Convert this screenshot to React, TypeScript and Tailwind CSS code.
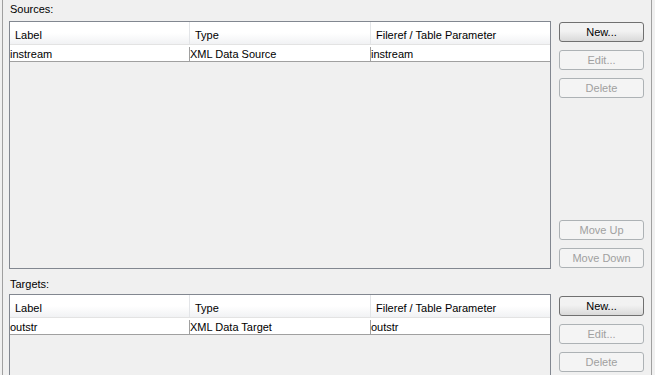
import React from 'react';

type Row = { label: string; type: string; fileref: string };

const columns = ['Label', 'Type', 'Fileref / Table Parameter'];

function DataTable({ rows, height }: { rows: Row[]; height: string }) {
  return (
    <div className={`w-[542px] ${height} border border-[#828790] bg-[#f0f0f0]`}>
      <div className="flex h-[23px] bg-gradient-to-b from-white from-50% to-[#f1f2f4] border-b border-[#e3e3e3]">
        {columns.map((c, i) => (
          <div
            key={c}
            className={`flex items-center pl-[5px] pt-[4px] ${i === 0 ? 'w-[180px]' : i === 1 ? 'w-[181px]' : 'flex-1'} ${
              i < 2 ? 'border-r border-[#e3e5e8]' : ''
            }`}
          >
            {c}
          </div>
        ))}
      </div>
      {rows.map((r) => (
        <div key={r.label} className="flex h-[17px] bg-white border-b border-[#a0a0a0] pt-[2px]">
          <div className="w-[180px] border-r border-[#a0a0a0] leading-[14px]">{r.label}</div>
          <div className="w-[181px] border-r border-[#a0a0a0] leading-[14px]">{r.type}</div>
          <div className="flex-1 leading-[14px]">{r.fileref}</div>
        </div>
      ))}
    </div>
  );
}

function Btn({ children, enabled }: { children: React.ReactNode; enabled?: boolean }) {
  return (
    <div
      className={`flex h-[20px] w-[85px] items-center justify-center rounded-[3px] border ${
        enabled
          ? 'border-[#707070] bg-gradient-to-b from-[#f2f2f2] from-45% to-[#d9d9d9] text-black'
          : 'border-[#adb2b5] bg-[#f4f4f4] text-[#a0a0a0]'
      }`}
    >
      {children}
    </div>
  );
}

export default function App() {
  return (
    <div className="h-[375px] w-[655px] overflow-hidden bg-[#f0f0f0] text-[11px] text-black font-['Liberation_Sans',Tahoma,sans-serif]">
      <div className="ml-[2px] h-full w-[650px] border-x border-[#a0a0a0] pl-[6px]">
        <div className="h-[20px] pt-[2px] leading-[14px] pl-[1px]">Sources:</div>
        <div className="flex gap-[8px] pt-px">
          <DataTable rows={[{ label: 'instream', type: 'XML Data Source', fileref: 'instream' }]} height="h-[248px]" />
          <div className="flex h-[247px] flex-col justify-between pt-[1px]">
            <div className="flex flex-col gap-[8px]">
              <Btn enabled>New...</Btn>
              <Btn>Edit...</Btn>
              <Btn>Delete</Btn>
            </div>
            <div className="flex flex-col gap-[8px]">
              <Btn>Move Up</Btn>
              <Btn>Move Down</Btn>
            </div>
          </div>
        </div>
        <div className="h-[25px] pt-[8px] leading-[14px] pl-[1px]">Targets:</div>
        <div className="flex gap-[8px]">
          <DataTable rows={[{ label: 'outstr', type: 'XML Data Target', fileref: 'outstr' }]} height="h-[120px]" />
          <div className="flex flex-col gap-[8px] pt-[2px]">
            <Btn enabled>New...</Btn>
            <Btn>Edit...</Btn>
            <Btn>Delete</Btn>
          </div>
        </div>
      </div>
    </div>
  );
}
